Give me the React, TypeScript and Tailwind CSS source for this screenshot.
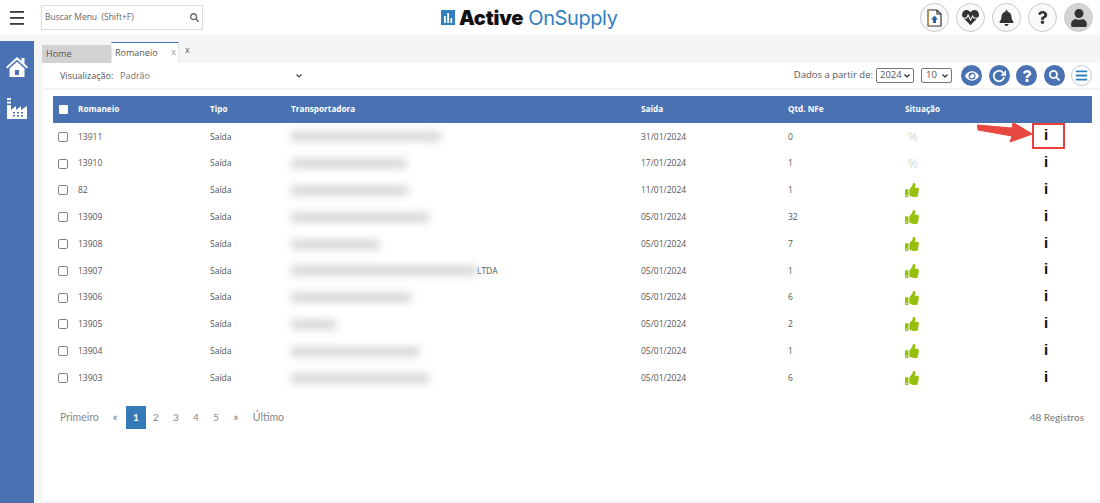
import { FaHeartbeat, FaBell, FaQuestion, FaUser, FaEye, FaSearch, FaThumbsUp, FaBars } from "react-icons/fa";
import { FiRotateCw } from "react-icons/fi";

const rows = [
  { id: "13911", date: "31/01/2024", qtd: "0", w: 150, ok: false },
  { id: "13910", date: "17/01/2024", qtd: "1", w: 115, ok: false },
  { id: "82", date: "11/01/2024", qtd: "1", w: 117, ok: true },
  { id: "13909", date: "05/01/2024", qtd: "32", w: 138, ok: true },
  { id: "13908", date: "05/01/2024", qtd: "7", w: 88, ok: true },
  { id: "13907", date: "05/01/2024", qtd: "1", w: 186, ok: true, suffix: "LTDA" },
  { id: "13906", date: "05/01/2024", qtd: "6", w: 120, ok: true },
  { id: "13905", date: "05/01/2024", qtd: "2", w: 45, ok: true },
  { id: "13904", date: "05/01/2024", qtd: "1", w: 128, ok: true },
  { id: "13903", date: "05/01/2024", qtd: "6", w: 138, ok: true },
];

const cols = "grid grid-cols-[25px_132px_81px_350px_147px_117px_124px_1fr] items-center";

function TopBtn({ children, gray }: { children: React.ReactNode; gray?: boolean }) {
  return (
    <div className={`w-[29px] h-[29px] rounded-full border border-[#c8c8c8] flex items-center justify-center text-[#333333] ${gray ? "bg-[#d4d4d6]" : "bg-[#fafafa]"}`}>
      {children}
    </div>
  );
}

function BlueBtn({ children }: { children: React.ReactNode }) {
  return <div className="w-[21px] h-[21px] rounded-full bg-[#4a72b2] flex items-center justify-center text-white">{children}</div>;
}

export default function App() {
  return (
    <div className="relative w-[1100px] h-[503px] overflow-hidden bg-[#f5f5f5] font-['Open_Sans',sans-serif] text-[#555555]">
      {/* top bar */}
      <header className="h-[35px] bg-white flex items-center relative">
        <div className="w-[41px] pl-[10px] shrink-0">
          <svg width="14" height="14" viewBox="0 0 14 14">
            <rect y="0" width="14" height="1.800" fill="#3a3a3a" />
            <rect y="6" width="14" height="1.800" fill="#3a3a3a" />
            <rect y="12" width="14" height="1.800" fill="#3a3a3a" />
          </svg>
        </div>
        <div className="w-[162px] h-[25px] border border-[#dcdcdc] bg-white flex items-center justify-between pl-[3px] pr-[3px] text-[8.500px] text-[#666666]">
          <span className="whitespace-pre">Buscar Menu  (Shift+F)</span>
          <FaSearch className="w-[9px] h-[9px] text-[#666666]" />
        </div>
        <div className="ml-[238px] flex items-center w-[190px]">
          <svg width="14" height="15" viewBox="0 0 14 15" className="mr-[4px] shrink-0">
            <rect width="14" height="15" fill="#2f7fc1" />
            <rect x="3" y="6" width="1.800" height="7" fill="#fff" />
            <rect x="6.200" y="3" width="1.800" height="10" fill="#fff" />
            <rect x="9.400" y="8" width="1.800" height="5" fill="#fff" />
          </svg>
          <span className="font-['Inter',sans-serif] font-black text-[20px] leading-none text-[#111111] tracking-[-0.2px]">Active</span>
          <span className="font-['Inter',sans-serif] text-[20px] leading-none text-[#2f7fc1] ml-[5px] tracking-[-0.4px]">OnSupply</span>
        </div>
        <div className="absolute right-[7px] top-[3px] flex gap-[7px]">
          <TopBtn>
            <svg width="15" height="18" viewBox="0 0 15 18" fill="none">
              <path d="M1 1h9l4 4v12H1z" stroke="#333" strokeWidth="1.200" fill="#fff" />
              <path d="M1 1v16" stroke="#e09a3c" strokeWidth="1.200" />
              <path d="M10 1v4h4" stroke="#333" strokeWidth="1.200" />
              <path d="M7.500 6.500l3.500 4H9v3.500H6V10.500H4z" fill="#2f5f9c" />
            </svg>
          </TopBtn>
          <TopBtn><FaHeartbeat className="w-[17px] h-[17px]" /></TopBtn>
          <TopBtn><FaBell className="w-[15px] h-[16px]" /></TopBtn>
          <TopBtn><FaQuestion className="w-[11px] h-[13px]" /></TopBtn>
          <TopBtn gray><FaUser className="w-[16px] h-[18px]" /></TopBtn>
        </div>
      </header>

      <div className="flex h-[468px]">
        {/* side bar */}
        <aside className="w-[34px] mt-[6px] bg-[#4a72b2] flex flex-col items-center pt-[16px] gap-[21px] text-white shrink-0">
          <svg width="22" height="20" viewBox="0 0 22 20" fill="#fff">
            <path d="M11 0l4.500 4V1h3v5.700L22 10l-1.200 1.400L11 2.800 1.200 11.400 0 10z" />
            <path fillRule="evenodd" d="M11 4.800l7.500 6.600V20h-15v-8.600zM9 13v5h4v-5z" />
          </svg>
          <svg width="20" height="21" viewBox="0 0 20 21" fill="#fff">
            <rect x="0" y="0" width="4" height="2" />
            <rect x="0" y="3.500" width="4" height="2" />
            <path d="M0 7h4v5l5-4v4l5-4v4l6-4v13H0z" />
            <g fill="#4a72b2">
              <rect x="6" y="14" width="2" height="1.500" />
              <rect x="10" y="14" width="2" height="1.500" />
              <rect x="14" y="14" width="2" height="1.500" />
              <rect x="6" y="17" width="2" height="1.500" />
              <rect x="10" y="17" width="2" height="1.500" />
              <rect x="14" y="17" width="2" height="1.500" />
            </g>
          </svg>
        </aside>

        {/* main */}
        <main className="flex-1 ml-[8px] flex flex-col">
          <div className="h-[28px] flex items-end text-[9px]">
            <div className="w-[69px] h-[18px] bg-[#d2d2d4] flex items-center pl-[4px] text-[#555555]">Home</div>
            <div className="w-[68px] h-[21px] bg-white border-t border-[#4a72b2] border-x border-x-[#e8e8e8] flex items-center justify-between pl-[3px] pr-[2px] text-[#555555]">
              <span>Romaneio</span>
              <span className="text-[#999999] -mt-[3px]">x</span>
            </div>
            <span className="ml-[6px] self-start mt-[8px] text-[#555555]">x</span>
          </div>

          <div className="flex-1 ml-[1px] bg-white mb-[3px] flex flex-col">
            <div className="h-[26px] flex items-center border-b border-[#f0f0f0] shadow-[0_1px_1px_#f5f5f5] relative">
              <span className="ml-[17px] w-[60px] text-[9px] text-[#555555]">Visualização:</span>
              <div className="w-[184px] flex items-center justify-between text-[9px] text-[#777777]">
                <span>Padrão</span>
                <svg width="6" height="4" viewBox="0 0 6 4" className="mr-[2px]"><path d="M0.500 0.500L3 3l2.500-2.500" fill="none" stroke="#444" strokeWidth="1.200" /></svg>
              </div>
              <div className="ml-auto flex items-center text-[9.500px] pr-[8px]">
                <span className="mr-[3px]">Dados a partir de:</span>
                <div className="w-[38px] h-[15px] border border-[#777777] rounded-[2px] flex items-center justify-between px-[3px] text-[#555555]">
                  <span>2024</span>
                  <svg width="6" height="4" viewBox="0 0 6 4"><path d="M0.500 0.500L3 3l2.500-2.500" fill="none" stroke="#222" strokeWidth="1.200" /></svg>
                </div>
                <div className="ml-[7px] w-[31px] h-[15px] border border-[#777777] rounded-[2px] flex items-center justify-between px-[3px] text-[#555555]">
                  <span className="ml-[1px]">10</span>
                  <svg width="6" height="4" viewBox="0 0 6 4"><path d="M0.500 0.500L3 3l2.500-2.500" fill="none" stroke="#222" strokeWidth="1.200" /></svg>
                </div>
                <div className="ml-[9px] flex gap-[6.500px]">
                  <BlueBtn><FaEye className="w-[14px] h-[14px]" /></BlueBtn>
                  <BlueBtn><FiRotateCw className="w-[14px] h-[14px]" strokeWidth={3} /></BlueBtn>
                  <BlueBtn><FaQuestion className="w-[10px] h-[12px]" /></BlueBtn>
                  <BlueBtn><FaSearch className="w-[11px] h-[11px]" /></BlueBtn>
                  <div className="w-[21px] h-[21px] rounded-full bg-white border border-[#c0c8d4] flex items-center justify-center text-[#2f7fc1]">
                    <FaBars className="w-[13px] h-[13px]" />
                  </div>
                </div>
              </div>
            </div>

            <div className="ml-[10px] mr-[8px] mt-[7px]">
              <div className={`${cols} h-[27px] bg-[#4a72b2] text-white text-[8.200px] font-bold`}>
                <span className="ml-[6px] w-[9px] h-[9px] bg-white rounded-[1px] -mt-[1px]" />
                <span>Romaneio</span>
                <span>Tipo</span>
                <span>Transportadora</span>
                <span>Saída</span>
                <span>Qtd. NFe</span>
                <span>Situação</span>
                <span />
              </div>
              {rows.map((r) => (
                <div key={r.id} className={`${cols} h-[26.800px] pt-[1px] text-[8.500px] text-[#555555]`}>
                  <span className="ml-[5px] w-[10px] h-[10px] bg-white rounded-[2px] border border-[#858585]" />
                  <span>{r.id}</span>
                  <span>Saída</span>
                  <div className="flex items-center">
                    <span className="block h-[9px] bg-[#d2d2d2] blur-[4px]" style={{ width: r.w }} />
                    {r.suffix && <span>{r.suffix}</span>}
                  </div>
                  <span>{r.date}</span>
                  <span>{r.qtd}</span>
                  <span className="flex">
                    {r.ok ? (
                      <FaThumbsUp className="w-[14px] h-[14px] text-[#97bf0d]" />
                    ) : (
                      <span className="text-[12px] leading-none font-light text-[#c8c8c8] ml-[3px]">%</span>
                    )}
                  </span>
                  <span className="text-[15px] font-bold text-[#111111] leading-none font-['Liberation_Sans',sans-serif] pl-[15px] -mt-[4px]">i</span>
                </div>
              ))}

              <div className="flex items-center justify-between mt-[15px] text-[10px] font-['Lato',sans-serif] text-[#888888] pr-[8px]">
                <div className="flex items-center pl-[7px]">
                  <span className="text-[10.500px] mr-[14px]">Primeiro</span>
                  <span className="w-[9px] text-[11px] text-[#777777]">«</span>
                  <span className="ml-[4px] w-[20px] h-[23px] bg-[#337ab7] text-white font-bold flex items-center justify-center">1</span>
                  <span className="w-[20px] text-center">2</span>
                  <span className="w-[20px] text-center">3</span>
                  <span className="w-[20px] text-center">4</span>
                  <span className="w-[20px] text-center">5</span>
                  <span className="w-[20px] text-center text-[11px] text-[#777777]">»</span>
                  <span className="ml-[7px] text-[10.500px]">Último</span>
                </div>
                <span className="text-[#777777]">48 Registros</span>
              </div>
            </div>
          </div>
        </main>
      </div>

      {/* annotation */}
      <div className="absolute left-[1032px] top-[123px] w-[33px] h-[26px] border-2 border-[#e8403f]" />
      <svg className="absolute left-[975px] top-[118px]" width="60" height="26" viewBox="0 0 60 26">
        <path d="M2.500 7L37 10 38 4.500 57.500 16 35 24 37 18 3 12z" fill="#e8483f" stroke="#e8483f" strokeLinejoin="round" />
      </svg>
    </div>
  );
}
